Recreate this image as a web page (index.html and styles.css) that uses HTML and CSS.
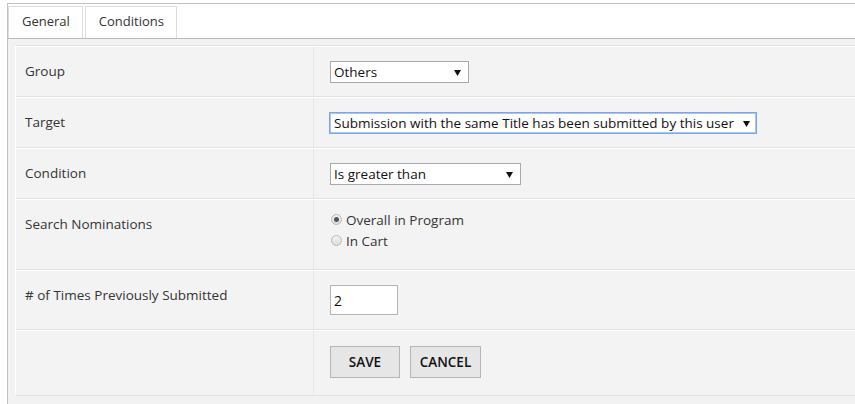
FILE: index.html
```html
<!DOCTYPE html>
<html>
<head>
<meta charset="utf-8">
<link rel="stylesheet" href="styles.css">
</head>
<body>
<div class="frame">
  <div class="tabs">
    <div class="tab">General</div>
    <div class="tab">Conditions</div>
  </div>
  <div class="panel">
    <div class="form">
      <div class="row r1">
        <div class="label">Group</div>
        <div class="field">
          <div class="select w-group"><span>Others</span><svg class="arrow" width="7" height="6" viewBox="0 0 7 6"><path d="M0 0H7L3.5 6Z" fill="#111"/></svg></div>
        </div>
      </div>
      <div class="row r2">
        <div class="label">Target</div>
        <div class="field">
          <div class="select w-target focus"><span>Submission with the same Title has been submitted by this user</span><svg class="arrow" width="7" height="6" viewBox="0 0 7 6"><path d="M0 0H7L3.5 6Z" fill="#111"/></svg></div>
        </div>
      </div>
      <div class="row r3">
        <div class="label">Condition</div>
        <div class="field">
          <div class="select w-cond"><span>Is greater than</span><svg class="arrow" width="7" height="6" viewBox="0 0 7 6"><path d="M0 0H7L3.5 6Z" fill="#111"/></svg></div>
        </div>
      </div>
      <div class="row r4">
        <div class="label">Search Nominations</div>
        <div class="field radios">
          <div class="radio"><span class="dot checked"></span>Overall in Program</div>
          <div class="radio"><span class="dot"></span>In Cart</div>
        </div>
      </div>
      <div class="row r5">
        <div class="label"># of Times Previously Submitted</div>
        <div class="field">
          <div class="numbox">2</div>
        </div>
      </div>
      <div class="row r6">
        <div class="label"></div>
        <div class="field buttons">
          <div class="btn save">SAVE</div>
          <div class="btn cancel">CANCEL</div>
        </div>
      </div>
    </div>
  </div>
</div>
</body>
</html>
```

FILE: styles.css
```css
html, body {
  margin: 0;
  padding: 0;
  overflow: hidden;
  background: #fff;
  font-family: "Open Sans", "DejaVu Sans", sans-serif;
  font-size: 13.5px;
  color: #333;
}
.frame {
  margin: 3px 0 0 7px;
  width: 870px;
  border-top: 1px solid #c2c2c2;
  border-left: 1px solid #c2c2c2;
}
.tabs {
  display: flex;
  gap: 2px;
  padding-top: 2px;
  border-bottom: 1px solid #b9b9b9;
  background: #fff;
}
.tab {
  height: 31px;
  line-height: 29px;
  padding: 0 13px;
  border: 1px solid #dcdcdc;
  border-bottom: none;
  color: #333;
  font-size: 13px;
}
.tab:first-child { padding: 0 12px 0 13px; }
.tab:last-child { padding: 0 12px 0 13px; }
.panel {
  background: #f2f2f2;
  padding: 6px 0 8px 7px;
}
.form {
  border-left: 1px solid #fff;
  border-bottom: 1px solid #e2e2e2;
}
.row {
  display: grid;
  grid-template-columns: 297px 1fr;
  border-top: 1px solid #fff;
  box-shadow: 0 -1px 0 #e2e2e2;
  margin-top: 1px;
  background: #f3f3f3;
}
.r1 { height: 49px; }
.r2 { height: 49px; }
.r3 { height: 49px; }
.r4 { height: 69px; }
.r5 { height: 58px; }
.r6 { height: 64px; }
.label {
  padding: 14px 0 0 9px;
  line-height: 20px;
}
.field {
  border-left: 1px solid #e6e6e6;
  padding: 14px 0 0 16px;
}
.select {
  box-sizing: border-box;
  height: 22px;
  border: 1px solid #a9a9a9;
  background: #fff;
  display: flex;
  align-items: center;
  justify-content: space-between;
  padding: 0 7px 0 3px;
  color: #111;
  line-height: 20px;
}
.select .arrow { flex: none; margin-top: 1px; }
.w-group { width: 139px; }
.w-cond { width: 191px; }
.w-target {
  width: 428px;
  margin-left: -1px;
  border-color: #7aa6e6;
  box-shadow: 0 0 0 1px #a8c6f2 inset;
  padding-left: 4px;
  padding-right: 6px;
}
.radios {
  padding-top: 9px;
}
.radio {
  display: flex;
  align-items: center;
  height: 21px;
  color: #333;
}
.dot {
  box-sizing: border-box;
  width: 11px;
  height: 11px;
  border-radius: 50%;
  border: 1px solid #b8b8b8;
  background: linear-gradient(#f4f4f4, #dcdcdc);
  margin: 0 4px 0 1px;
  position: relative;
}
.dot.checked::after {
  content: "";
  position: absolute;
  left: 2px;
  top: 2px;
  width: 5px;
  height: 5px;
  border-radius: 50%;
  background: #555;
}
.numbox {
  box-sizing: border-box;
  width: 68px;
  height: 30px;
  border: 1px solid #b4b4b4;
  background: #fff;
  padding: 5px 0 0 3px;
  line-height: 20px;
  color: #111;
  font-size: 14px;
}
.buttons {
  display: flex;
  gap: 10px;
  padding-top: 15px;
  align-items: flex-start;
}
.btn {
  box-sizing: border-box;
  height: 32px;
  border: 1px solid #b5b5b5;
  background: #e6e6e6;
  color: #111;
  font-weight: 600;
  font-size: 13.5px;
  line-height: 30px;
  text-align: center;
}
.save { width: 70px; }
.cancel { width: 71px; }
```
